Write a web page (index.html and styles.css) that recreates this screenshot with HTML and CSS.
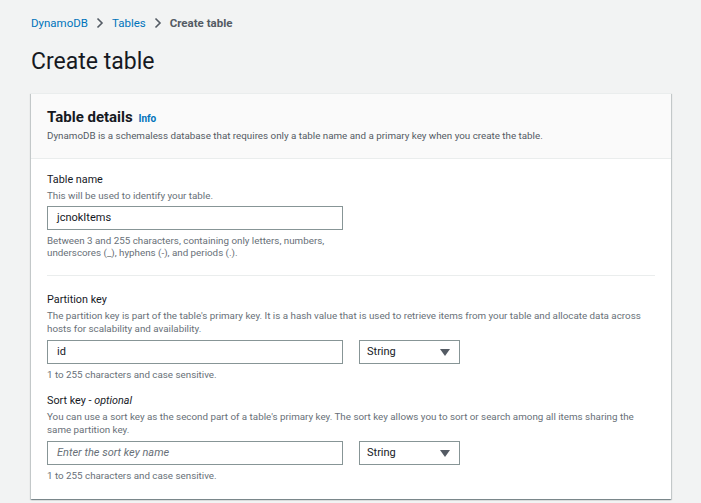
FILE: index.html
```html
<!DOCTYPE html>
<html>
<head>
<meta charset="utf-8">
<link rel="stylesheet" href="styles.css">
</head>
<body>
<div class="page">
  <nav class="crumbs">
    <a class="crumb-link">DynamoDB</a>
    <svg class="chev" width="8" height="12" viewBox="0 0 8 12"><path d="M1.5 1.5 L6 6 L1.5 10.5" fill="none" stroke="#545b64" stroke-width="1.6"/></svg>
    <a class="crumb-link">Tables</a>
    <svg class="chev" width="8" height="12" viewBox="0 0 8 12"><path d="M1.5 1.5 L6 6 L1.5 10.5" fill="none" stroke="#545b64" stroke-width="1.6"/></svg>
    <span class="crumb-current">Create table</span>
  </nav>
  <h1 class="title">Create table</h1>
  <section class="card">
    <header class="card-head">
      <h2 class="card-title">Table details <span class="info">Info</span></h2>
      <p class="card-desc">DynamoDB is a schemaless database that requires only a table name and a primary key when you create the table.</p>
    </header>
    <div class="card-body">
      <div class="field">
        <div class="label">Table name</div>
        <div class="desc">This will be used to identify your table.</div>
        <div class="input wide-input">jcnokItems</div>
        <div class="hint">Between 3 and 255 characters, containing only letters, numbers,<br>underscores (_), hyphens (-), and periods (.).</div>
      </div>
      <hr class="divider">
      <div class="field">
        <div class="label">Partition key</div>
        <div class="desc">The partition key is part of the table's primary key. It is a hash value that is used to retrieve items from your table and allocate data across hosts for scalability and availability.</div>
        <div class="row">
          <div class="input key-input">id</div>
          <div class="select">String<span class="caret"></span></div>
        </div>
        <div class="hint">1 to 255 characters and case sensitive.</div>
      </div>
      <div class="field second">
        <div class="label">Sort key - <i>optional</i></div>
        <div class="desc">You can use a sort key as the second part of a table's primary key. The sort key allows you to sort or search among all items sharing the same partition key.</div>
        <div class="row">
          <div class="input key-input placeholder">Enter the sort key name</div>
          <div class="select">String<span class="caret"></span></div>
        </div>
        <div class="hint">1 to 255 characters and case sensitive.</div>
      </div>
    </div>
  </section>
</div>
</body>
</html>
```

FILE: styles.css
```css
* { box-sizing: border-box; }
html, body { margin: 0; padding: 0; }
body {
  background: #f2f3f3;
  font-family: Roboto, "Liberation Sans", sans-serif;
  color: #16191f;
  width: 701px;
  height: 503px;
  overflow: hidden;
}
.page { padding: 15px 30px 0 31px; }
.crumbs {
  display: flex;
  align-items: center;
  gap: 8px;
  font-size: 11.5px;
  height: 16px;
}
.crumb-link { color: #0073bb; }
.crumb-current { color: #545b64; font-weight: 700; }
.chev { display: block; }
.title {
  margin: 16px 0 0;
  font-size: 23px;
  font-weight: 400;
  line-height: 30px;
  color: #16191f;
}
.card {
  margin-top: 16px;
  width: 640px;
  background: #fff;
  box-shadow: 0 1px 1px 0 rgba(0,28,36,0.3), 1px 1px 1px 0 rgba(0,28,36,0.15), -1px 1px 1px 0 rgba(0,28,36,0.15);
  border-top: 1px solid #eaeded;
}
.card-head {
  background: #fafafa;
  border-bottom: 1px solid #eaeded;
  padding: 13px 16px 15px;
}
.card-title {
  margin: 0;
  font-size: 15px;
  font-weight: 700;
  line-height: 20px;
  color: #16191f;
}
.info {
  font-size: 10px;
  color: #0073bb;
  font-weight: 700;
  margin-left: 2px;
}
.card-desc {
  margin: 0;
  font-size: 9.8px;
  line-height: 14px;
  color: #545b64;
}
.card-body { padding: 14px 16px 17px; }
.label { font-size: 10.8px; line-height: 14px; color: #16191f; }
.desc { font-size: 9.8px; line-height: 13px; color: #687078; margin-top: 2px; }
.hint { font-size: 9.8px; line-height: 12px; color: #687078; margin-top: 5px; }
.input {
  height: 24px;
  border: 1px solid #879596;
  background: #fff;
  font-size: 11px;
  line-height: 22px;
  padding: 0 9px;
  color: #16191f;
  margin-top: 4px;
}
.wide-input { width: 296px; }
.row { display: flex; gap: 16px; margin-top: 5px; }
.row .input { margin-top: 0; }
.key-input { width: 296px; }
.placeholder { font-style: italic; color: #687078; }
.select {
  width: 101px;
  height: 24px;
  border: 1px solid #879596;
  font-size: 11px;
  line-height: 22px;
  padding: 0 7px;
  display: flex;
  justify-content: space-between;
  align-items: center;
  color: #16191f;
}
.caret {
  width: 0; height: 0;
  border-left: 5px solid transparent;
  border-right: 5px solid transparent;
  border-top: 7px solid #545b64;
  margin-right: 2px;
}
.divider {
  border: 0;
  border-top: 1px solid #eaeded;
  margin: 16px 0 17px;
}
.second { margin-top: 13px; }
```
